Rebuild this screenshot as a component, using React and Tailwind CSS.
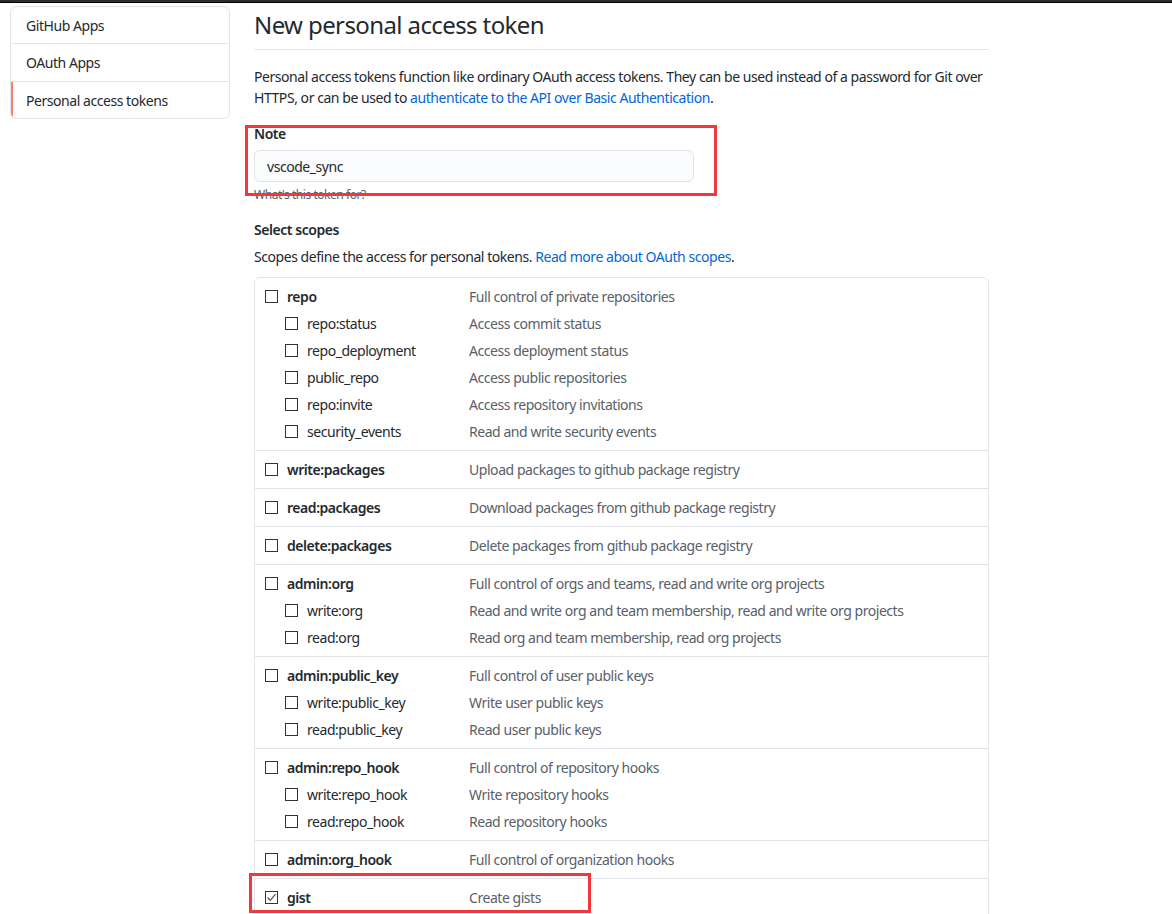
import React from 'react';

const groups = [
  {
    name: 'repo',
    desc: 'Full control of private repositories',
    children: [
      ['repo:status', 'Access commit status'],
      ['repo_deployment', 'Access deployment status'],
      ['public_repo', 'Access public repositories'],
      ['repo:invite', 'Access repository invitations'],
      ['security_events', 'Read and write security events'],
    ],
  },
  { name: 'write:packages', desc: 'Upload packages to github package registry', children: [] },
  { name: 'read:packages', desc: 'Download packages from github package registry', children: [] },
  { name: 'delete:packages', desc: 'Delete packages from github package registry', children: [] },
  {
    name: 'admin:org',
    desc: 'Full control of orgs and teams, read and write org projects',
    children: [
      ['write:org', 'Read and write org and team membership, read and write org projects'],
      ['read:org', 'Read org and team membership, read org projects'],
    ],
  },
  {
    name: 'admin:public_key',
    desc: 'Full control of user public keys',
    children: [
      ['write:public_key', 'Write user public keys'],
      ['read:public_key', 'Read user public keys'],
    ],
  },
  {
    name: 'admin:repo_hook',
    desc: 'Full control of repository hooks',
    children: [
      ['write:repo_hook', 'Write repository hooks'],
      ['read:repo_hook', 'Read repository hooks'],
    ],
  },
  { name: 'admin:org_hook', desc: 'Full control of organization hooks', children: [] },
  { name: 'gist', desc: 'Create gists', children: [], checked: true, marked: true },
];

function Checkbox({ checked }) {
  return (
    <span className="w-[13px] h-[13px] border border-[#333] bg-white flex items-center justify-center shrink-0">
      {checked && (
        <svg width="11" height="11" viewBox="0 0 11 11" fill="none" stroke="#555" strokeWidth="1.3">
          <path d="M1.5 5.5 L4.3 8.3 L9.5 2.2" />
        </svg>
      )}
    </span>
  );
}

function ScopeRow({ name, desc, child, checked }) {
  return (
    <div className="flex items-center h-[27px]">
      <div className={`flex items-center w-[204px] ${child ? 'pl-[30px]' : 'pl-[10px]'}`}>
        <Checkbox checked={checked} />
        <span className={`ml-[9px] text-[#24292e] ${child ? '' : 'font-semibold'}`}>{name}</span>
      </div>
      <span className="text-[#586069] ml-[10px]">{desc}</span>
    </div>
  );
}

export default function App() {
  const font = { fontFamily: '"Noto Sans", "Open Sans", Arial, sans-serif' };
  return (
    <div className="bg-white min-h-[914px] w-[1172px] overflow-hidden text-[14px] leading-[21px] text-[#24292e] tracking-[-0.45px]" style={font}>
      <div className="h-[3px] bg-[#2e2e2e] border-b border-black" />
      <div className="flex gap-[24px] pl-[10px]">
        {/* Sidebar */}
        <nav className="w-[220px] mt-[3px] self-start border border-[#e1e4e8] rounded-md overflow-hidden">
          <div className="h-[37px] flex items-center pl-[15px] border-b border-[#e1e4e8]">GitHub Apps</div>
          <div className="h-[38px] flex items-center pl-[15px] border-b border-[#e1e4e8]">OAuth Apps</div>
          <div className="h-[36px] flex items-center pl-[13px] border-l-2 border-[#f9826c]">Personal access tokens</div>
        </nav>

        {/* Main */}
        <main className="w-[735px]">
          <div className="mt-[4px] pb-[6px] border-b border-[#e1e4e8]">
            <h1 className="text-[24px] leading-[36px] font-normal tracking-[-0.6px]">New personal access token</h1>
          </div>
          <p className="mt-[16px]">
            Personal access tokens function like ordinary OAuth access tokens. They can be used instead of a password for Git over HTTPS, or can be used to{' '}
            <a className="text-[#0366d6]">authenticate to the API over Basic Authentication</a>.
          </p>

          <div className="relative mt-[15px]">
            <label className="block font-semibold">Note</label>
            <div className="mt-[6px] w-[440px] h-[32px] bg-[#fafbfc] border border-[#e1e4e8] rounded-md flex items-center pl-[12px]">
              vscode_sync
            </div>
            <p className="mt-[4px] text-[12px] leading-[18px] text-[#586069]">What's this token for?</p>
            <div className="absolute left-[-9px] top-[2px] w-[472px] h-[71px] border-[3px] border-[#f2383d]" />
          </div>

          <h3 className="mt-[15px] font-semibold">Select scopes</h3>
          <p className="mt-[6px]">
            Scopes define the access for personal tokens. <a className="text-[#0366d6]">Read more about OAuth scopes</a>.
          </p>

          <div className="mt-[10px] border border-[#e1e4e8] rounded-t-md">
            {groups.map((g, i) => (
              <div key={g.name} className={`relative py-[5px] ${i > 0 ? 'border-t border-[#e1e4e8]' : ''}`}>
                <ScopeRow name={g.name} desc={g.desc} checked={g.checked} />
                {g.children.map(([n, d]) => (
                  <ScopeRow key={n} name={n} desc={d} child />
                ))}
                {g.marked && (
                  <div className="absolute left-[-6px] top-[-6px] w-[342px] h-[40px] border-[3px] border-[#f2383d]" />
                )}
              </div>
            ))}
            <div className="h-[40px]" />
          </div>
        </main>
      </div>
    </div>
  );
}
